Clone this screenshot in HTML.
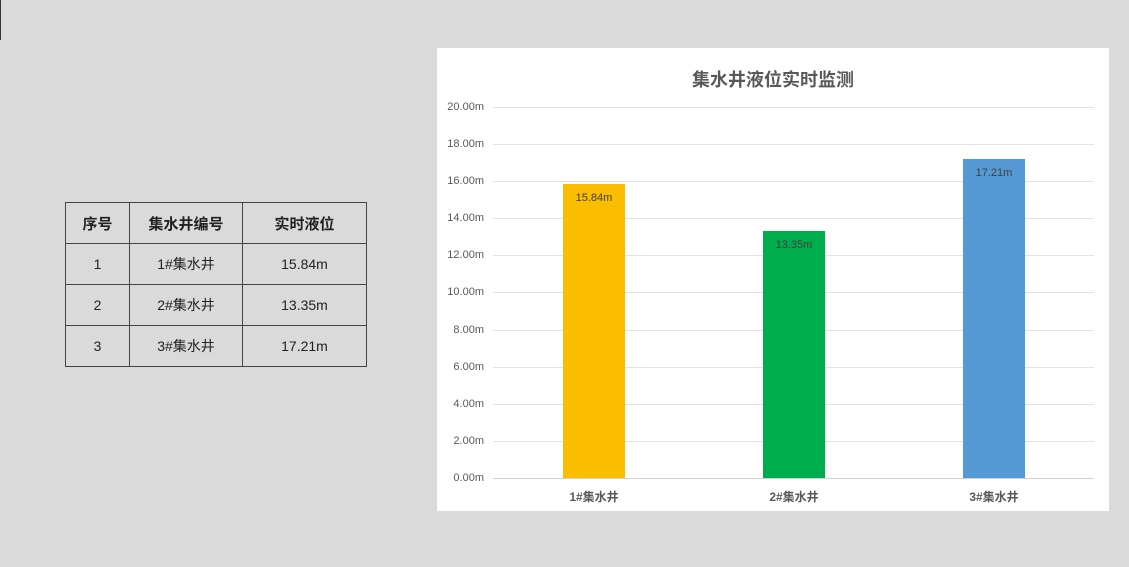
<!DOCTYPE html>
<html><head><meta charset="utf-8"><style>
body{margin:0;width:1129px;height:567px;background:#dadada;position:relative;overflow:hidden;font-family:"Liberation Sans","Noto Sans CJK SC",sans-serif;}
.t{position:absolute;left:65px;top:202px;width:301px;table-layout:fixed;border-collapse:collapse;font-size:14px;color:#222;}
.t td{border:1px solid #444;text-align:center;padding:0;height:40px;}
.t th{border:1px solid #444;height:40px;padding:0;font-size:15px;font-weight:bold;}
.c{position:absolute;left:437px;top:48px;width:672px;height:463px;background:#fff;}
.g{position:absolute;left:56px;width:601px;height:1px;background:#e2e2e2;}
.y{position:absolute;left:0;width:47px;text-align:right;font-size:11px;color:#595959;}
.b{position:absolute;width:62px;bottom:33px;text-align:center;font-size:11px;color:#404040;padding-top:8px;box-sizing:border-box;}
.x{position:absolute;top:440px;width:100px;text-align:center;font-size:12px;font-weight:bold;color:#595959;}
</style></head><body>
<div style="position:absolute;left:0;top:0;width:1px;height:40px;background:#333"></div>
<table class="t">
<colgroup><col style="width:64px"><col style="width:113px"><col style="width:124px"></colgroup>
<tr><th>序号</th><th>集水井编号</th><th>实时液位</th></tr>
<tr><td>1</td><td>1#集水井</td><td>15.84m</td></tr>
<tr><td>2</td><td>2#集水井</td><td>13.35m</td></tr>
<tr><td>3</td><td>3#集水井</td><td>17.21m</td></tr>
</table>
<div class="c">
<div style="position:absolute;top:18px;width:100%;text-align:center;font-size:18px;font-weight:bold;color:#595959">集水井液位实时监测</div>
<div class="g" style="top:59px"></div><div class="y" style="top:53px">20.00m</div>
<div class="g" style="top:96px"></div><div class="y" style="top:90px">18.00m</div>
<div class="g" style="top:133px"></div><div class="y" style="top:127px">16.00m</div>
<div class="g" style="top:170px"></div><div class="y" style="top:164px">14.00m</div>
<div class="g" style="top:207px"></div><div class="y" style="top:201px">12.00m</div>
<div class="g" style="top:244px"></div><div class="y" style="top:238px">10.00m</div>
<div class="g" style="top:282px"></div><div class="y" style="top:276px">8.00m</div>
<div class="g" style="top:319px"></div><div class="y" style="top:313px">6.00m</div>
<div class="g" style="top:356px"></div><div class="y" style="top:350px">4.00m</div>
<div class="g" style="top:393px"></div><div class="y" style="top:387px">2.00m</div>
<div class="g" style="top:430px;background:#d0d0d0"></div><div class="y" style="top:424px">0.00m</div>
<div class="b" style="left:126px;height:294px;background:#fbbd00">15.84m</div>
<div class="b" style="left:326px;height:247px;background:#00ad4d">13.35m</div>
<div class="b" style="left:526px;height:319px;background:#5599d4">17.21m</div>
<div class="x" style="left:107px">1#集水井</div>
<div class="x" style="left:307px">2#集水井</div>
<div class="x" style="left:507px">3#集水井</div>
</div>
</body></html>
